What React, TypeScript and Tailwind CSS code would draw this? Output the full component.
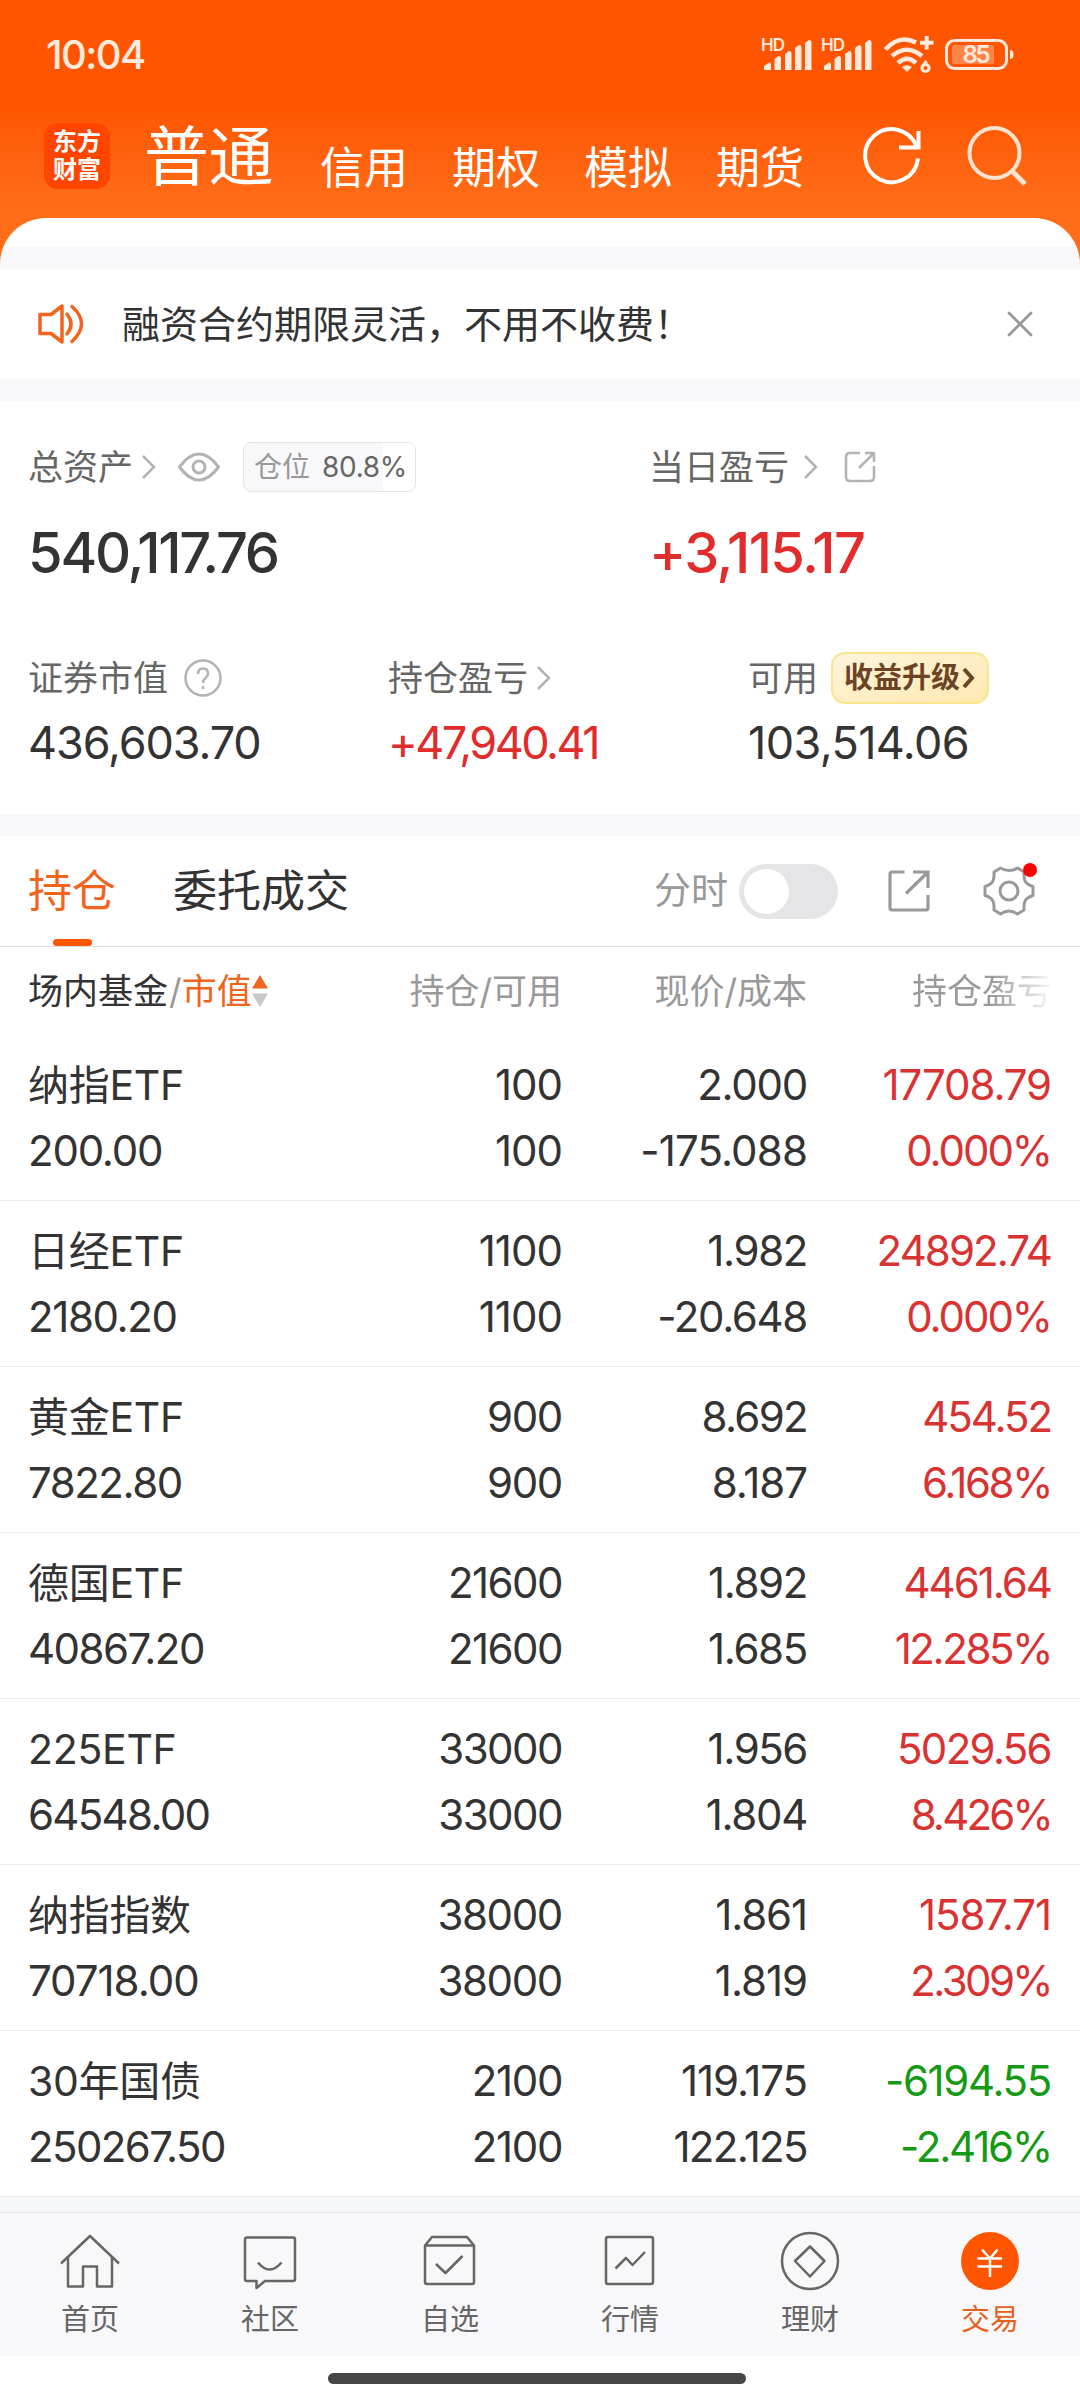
import { useState } from "react";
import clsx from "clsx";

type Holding = {
    name: string;
    value: string;
    amount: string;
    available: string;
    price: string;
    cost: string;
    profit: string;
    rate: string;
}

const HOLDINGS: Holding[] = [
    { name: "纳指ETF", value: "200.00", amount: "100", available: "100", price: "2.000", cost: "-175.088", profit: "17708.79", rate: "0.000%" },
    { name: "日经ETF", value: "2180.20", amount: "1100", available: "1100", price: "1.982", cost: "-20.648", profit: "24892.74", rate: "0.000%" },
    { name: "黄金ETF", value: "7822.80", amount: "900", available: "900", price: "8.692", cost: "8.187", profit: "454.52", rate: "6.168%" },
    { name: "德国ETF", value: "40867.20", amount: "21600", available: "21600", price: "1.892", cost: "1.685", profit: "4461.64", rate: "12.285%" },
    { name: "225ETF", value: "64548.00", amount: "33000", available: "33000", price: "1.956", cost: "1.804", profit: "5029.56", rate: "8.426%" },
    { name: "纳指指数", value: "70718.00", amount: "38000", available: "38000", price: "1.861", cost: "1.819", profit: "1587.71", rate: "2.309%" },
    { name: "30年国债", value: "250267.50", amount: "2100", available: "2100", price: "119.175", cost: "122.125", profit: "-6194.55", rate: "-2.416%" },
];

const ACCOUNTS = ["信用", "期权", "模拟", "期货"];

// how much each glyph should be tightened in table figures, in px
const TIGHTEN: Record<string, number> = {
    "0": 0.6, "1": 0.3, "2": 2, "3": 1.7, "4": 2.3, "5": 1.3, "6": 1.7, "7": 0.6, "8": 0.8, "9": 1.3, "%": 7, "-": -1.5,
};

const Figure = ({ children }: { children: string }) => {
    const total = children.split("").reduce((sum, c) => sum + (TIGHTEN[c] ?? 0), 0);

    return <div style={{ letterSpacing: `${(-0.5 - total / children.length).toFixed(2)}px` }}>{children}</div>;
}

const Signal = ({ className }: { className?: string }) => (
    <svg className={className} width="52" height="36" viewBox="0 0 52 36" fill="currentColor">
        <text x="0" y="14.500" fontSize="17" fontWeight="600" fontFamily="Inter, sans-serif" textLength="24">HD</text>
        <path d="M3 34v-4l5-3.500q2 0 2 2V34zM13.500 34V23l4-3q2.500 0 2.500 2v12zM24 34V18l4-3q2.500 0 2.500 2v17zM34 34V12l4-3q2.500 0 2.500 2v23zM44 34V7l4-3q2.500 0 2.500 2v28z" />
    </svg>
);

const Wifi = ({ className }: { className?: string }) => (
    <svg className={className} width="50" height="38" viewBox="0 0 50 38" fill="none" stroke="currentColor" strokeWidth="4.500">
        <path d="M1.500 13.500Q15-2 32 6.500M8 20Q23 7.500 38 20M14 27Q23 18.500 32 27" />
        <path d="M23 36l-5-5q5-3.500 10 0z" fill="currentColor" stroke="none" />
        <path d="M42.700 0v13.500M36 6.700h13.500" strokeWidth="4" />
        <path d="M42.500 25l-4 5.500" strokeWidth="3" />
        <circle cx="41.500" cy="32" r="3.600" strokeWidth="3" />
    </svg>
);

const Battery = ({ className }: { className?: string }) => (
    <svg className={className} width="70" height="36" viewBox="0 -3 70 36" fill="none">
        <rect x="1.500" y="1.500" width="60" height="28" rx="8" stroke="currentColor" strokeWidth="3" />
        <rect x="7" y="6" width="42" height="19" rx="2" fill="#ff8447" />
        <path d="M65 11q3.500 0 3.500 4.500t-3.500 4.500z" fill="currentColor" />
        <text x="31.500" y="24" textAnchor="middle" fontSize="24" fontWeight="600" fontFamily="Inter, sans-serif" fill="currentColor" textLength="28">85</text>
    </svg>
);

const Chevron = ({ className }: { className?: string }) => (
    <svg className={className} width="16" height="26" viewBox="0 0 16 26" fill="none" stroke="#b3b3b3" strokeWidth="2.500">
        <path d="M2 2l11 11L2 24" />
    </svg>
);

const StatusBar = () => (
    <div className="flex h-[110px] items-start pl-[46px] pr-[65px] pt-9 text-[#ffeadd]">
        <span className="mt-[-1px] text-[40px] font-medium leading-[40px] tracking-[-1.600px]">10:04</span>
        <div className="ml-auto flex">
            <Signal />
            <Signal className="ml-2" />
            <Wifi className="ml-[11px]" />
            <Battery className="ml-[11px]" />
        </div>
    </div>
);

const AccountTabs = () => (
    <div className="flex h-[108px] text-white">
        <div className="ml-11 mt-[13px] flex size-[66px] flex-col items-center justify-center rounded-[14px] bg-[#ff4500] text-[24px] font-bold leading-[28px]">
            <span>东方</span>
            <span>财富</span>
        </div>
        <div className="ml-[34px] mt-[11px] text-[65px] leading-[72px] tracking-[-0.5px]">普通</div>
        <div className="ml-[47px] mt-[36px] flex gap-11 text-[44px] leading-[44px]">
            {ACCOUNTS.map(a => <span key={a}>{a}</span>)}
        </div>
        <svg className="ml-[57px] mt-[17px] shrink-0" width="62" height="62" viewBox="0 0 62 62" fill="none" stroke="currentColor" strokeWidth="4">
            <path d="M55.500 19.500A26.500 26.500 0 1 0 57 31.500M38 20.500h19.500V4" />
        </svg>
        <svg className="ml-[43px] mt-4 shrink-0 text-[#ffe3d1]" width="64" height="64" viewBox="0 0 64 64" fill="none" stroke="currentColor" strokeWidth="4">
            <circle cx="28.500" cy="27" r="25" />
            <path d="M46 45l13 13" strokeWidth="5" />
        </svg>
    </div>
);

const Notice = ({ onClose }: { onClose: () => void }) => (
    <div className="flex h-[110px] items-center bg-white pl-9 pr-[46px]">
        <svg width="50" height="44" viewBox="0 0 50 44" fill="none" stroke="#f0641e" strokeWidth="3.500">
            <path d="M4 12.500h11L26 4v36L15 31.500H4z" strokeLinejoin="round" />
            <path d="M31 12q8 10 0 20M36 4.500q19 17 0 35" strokeLinecap="round" />
        </svg>
        <span className="ml-9 text-[38px] leading-[38px] text-[#333]">融资合约期限灵活，不用不收费！</span>
        <button className="ml-auto" onClick={onClose}>
            <svg width="28" height="28" viewBox="0 0 28 28" stroke="#999" strokeWidth="2.800" strokeLinecap="round">
                <path d="M3 3l22 22M25 3L3 25" />
            </svg>
        </button>
    </div>
);

const Summary = () => (
    <section className="h-[413px] bg-white px-7 pt-[41px] text-[35px] leading-[50px] text-[#666]">
        <div className="flex">
            <div className="w-[621px]">
                <div className="flex h-[50px] items-center">
                    <span>总资产</span>
                    <Chevron className="ml-2" />
                    <svg className="ml-5" width="44" height="32" viewBox="0 0 44 32" fill="none" stroke="#b3b3b3" strokeWidth="3">
                        <path d="M2.500 16Q12 3 22 3t19.500 13Q32 29 22 29T2.500 16z" strokeLinejoin="round" />
                        <circle cx="22" cy="16" r="6" />
                    </svg>
                    <div className="ml-[22px] flex h-[50px] w-[173px] items-center rounded-lg border border-[#e5e5e7] bg-linear-to-r from-[#f8f8fa] from-81% to-white to-81% pl-[10px] text-[28px]">
                        <span className="text-[#999]">仓位</span>
                        <span className="ml-3 tracking-[-0.3px]">80.8%</span>
                    </div>
                </div>
                <div className="mt-[30px] text-[56px] font-medium leading-[62px] tracking-[-2.200px] text-[#333]">540,117.76</div>
            </div>
            <div>
                <div className="flex h-[50px] items-center">
                    <span>当日盈亏</span>
                    <Chevron className="ml-[14px]" />
                    <svg className="ml-6" width="34" height="34" viewBox="0 0 34 34" fill="none" stroke="#b3b3b3" strokeWidth="2.500">
                        <path d="M17 3H7Q3 3 3 7v20q0 4 4 4h20q4 0 4-4V16M22 3h9v9M31 3L16 18" strokeLinejoin="round" />
                    </svg>
                </div>
                <div className="mt-[30px] text-[56px] font-medium leading-[62px] tracking-[-1.600px] text-[#e22b2b]">+3,115.17</div>
            </div>
        </div>
        <div className="mt-[68px] flex">
            <div className="w-[360px]">
                <div className="flex h-[52px] items-center">
                    <span>证券市值</span>
                    <svg className="ml-[15px]" width="40" height="40" viewBox="0 0 40 40" fill="none" stroke="#b3b3b3" strokeWidth="2.500">
                        <circle cx="20" cy="20" r="17.500" />
                        <path d="M15 16q0-5.500 5-5.500t5 5q0 2.500-2.500 4.500T20 25M20 28v3" />
                    </svg>
                </div>
                <div className="mt-[14px] text-[45px] leading-[50px] tracking-[-1.100px] text-[#333]">436,603.70</div>
            </div>
            <div className="w-[360px]">
                <div className="flex h-[52px] items-center">
                    <span>持仓盈亏</span>
                    <Chevron className="ml-2" />
                </div>
                <div className="mt-[14px] text-[45px] leading-[50px] tracking-[-2.500px] text-[#e22b2b]">+47,940.41</div>
            </div>
            <div>
                <div className="flex h-[52px] items-center">
                    <span>可用</span>
                    <div className="ml-[13px] flex h-[52px] w-[158px] items-center rounded-[14px] border-2 border-[#fae58e] bg-linear-to-br from-[#fff4dc] to-[#ffe9b0] pl-[11px] text-[29px] font-bold text-[#6b4426]">
                        收益升级
                        <svg className="ml-px" width="15" height="24" viewBox="0 0 15 24" fill="none" stroke="currentColor" strokeWidth="4">
                            <path d="M3 3l8 9-8 9" />
                        </svg>
                    </div>
                </div>
                <div className="mt-[14px] text-[45px] leading-[50px] tracking-[-0.600px] text-[#333]">103,514.06</div>
            </div>
        </div>
    </section>
);

const ListToolbar = () => {
    const [intraday, setIntraday] = useState(false);

    return (
        <div className="flex h-[111px] items-center border-b border-[#dedede] bg-white pl-7 text-[44px]">
            <div className="relative flex h-full items-center text-[#f0641e]">
                持仓
                <span className="absolute bottom-0 left-[25px] h-[7px] w-[39px] rounded-full bg-[#ff5500]"></span>
            </div>
            <span className="ml-[57px] text-[#333]">委托成交</span>
            <span className="ml-auto text-[37px] text-[#999]">分时</span>
            <button
                onClick={() => setIntraday(!intraday)}
                className={clsx("ml-[11px] flex h-[55px] w-[99px] rounded-full p-[5px]", intraday ? "justify-end bg-[#ff5500]" : "bg-[#e5e5e7]")}>
                <span className="size-[45px] rounded-full bg-white"></span>
            </button>
            <svg className="ml-[48px]" width="46" height="46" viewBox="0 0 46 46" fill="none" stroke="#999" strokeWidth="3.200">
                <path d="M18.500 4H6Q4 4 4 6v34q0 2 2 2h34q2 0 2-2V27M27 4h15v16M42 4L20 25.500" />
            </svg>
            <div className="relative ml-[50px] mr-[44px]">
                <svg width="54" height="54" viewBox="0 0 54 54" fill="none" stroke="#999" strokeWidth="3" strokeLinejoin="round">
                    <path d="M18.500 4q8.500 5 17 0l6.500 4q-.500 9 3 11.500t6 3v9q-2.500.500-6 3t-3 11.500l-6.500 4q-8.500-6-17 0l-6.500-4q.500-9-3-11.500t-6-3v-9q2.500-.500 6-3t3-11.500z" />
                    <circle cx="27" cy="27" r="9" />
                </svg>
                <span className="absolute -right-px -top-px size-[14px] rounded-full bg-[#ff0000]"></span>
            </div>
        </div>
    );
}

const HoldingRow = ({ holding }: { holding: Holding }) => (
    <div className="grid h-[166px] grid-cols-[290px_244px_245px_244px] border-b border-[#ececec] pl-7 pt-[17px] text-right text-[42px] leading-[66px] text-[#333]">
        <div className="text-left">
            <div className="text-[41px] tracking-[-0.3px]">{holding.name}</div>
            <Figure>{holding.value}</Figure>
        </div>
        <div>
            <Figure>{holding.amount}</Figure>
            <Figure>{holding.available}</Figure>
        </div>
        <div>
            <Figure>{holding.price}</Figure>
            <Figure>{holding.cost}</Figure>
        </div>
        <div className={holding.profit.startsWith("-") ? "text-[#149a14]" : "text-[#d93232]"}>
            <Figure>{holding.profit}</Figure>
            <Figure>{holding.rate}</Figure>
        </div>
    </div>
);

const HoldingList = () => (
    <section className="bg-white">
        <div className="grid h-[88px] grid-cols-[290px_244px_245px_245px] items-center pl-7 text-right text-[35px] leading-[40px] text-[#999]">
            <div className="flex items-center">
                <span className="text-[#333]">场内基金</span>
                <span className="ml-px">/</span>
                <span className="text-[#f0641e]">市值</span>
                <svg width="16" height="32" viewBox="0 0 16 32">
                    <path d="M8 0l8 13.500H0z" fill="#f0641e" />
                    <path d="M8 32L0 18.500h16z" fill="#c8c8c8" />
                </svg>
            </div>
            <span>持仓/可用</span>
            <span>现价/成本</span>
            <span className="bg-linear-to-r from-[#999] from-75% to-[#fafafa] bg-clip-text text-transparent">持仓盈亏</span>
        </div>
        {HOLDINGS.map(h => <HoldingRow key={h.name} holding={h} />)}
    </section>
);

const NAV_ITEMS = [
    { label: "首页", icon: <path d="M1 32.500L30 5l29 27.500M8 26.500v29h15v-20h14v20h15v-29" /> },
    { label: "社区", icon: <path d="M7 6.500h46q2 0 2 2V48q0 2-2 2H25l-8.500 7V50H7q-2 0-2-2V8.500q0-2 2-2zM18 31.500q11.500 14 23.500 0" /> },
    { label: "自选", icon: <path d="M5 14.500L12 6h35l7 8.500V51q0 2-2 2H7q-2 0-2-2zh49M16 33l9.500 9L42.500 25" /> },
    { label: "行情", icon: <path d="M8 6h43q2 0 2 2v43q0 2-2 2H8q-2 0-2-2V8q0-2 2-2zM15.500 37.500L26 27l6.500 7L45 21" /> },
    { label: "理财", icon: <><circle cx="30" cy="30" r="28" /><path d="M30 15.500L44.500 30 30 45.500 15 30z" /></> },
    { label: "交易", icon: <><circle cx="30" cy="30" r="29" fill="#ff5500" stroke="none" /><path d="M22 18.500l8 9 7.500-9M17.500 27.500h24.500M17.500 35.500h24.500M30 27v19" stroke="#fff" /></> },
];

const BottomNav = () => (
    <nav className="grid h-[144px] grid-cols-6 border-t border-[#e2e2e4] bg-[#f8f8fa] pt-[18px]">
        {NAV_ITEMS.map((item, i) => (
            <div key={item.label} className={clsx("flex flex-col items-center text-[29px] leading-[36px]", i === 5 ? "text-[#e8601c]" : "text-[#666]")}>
                <svg width="60" height="60" viewBox="0 0 60 60" fill="none" stroke="#666" strokeWidth="2.500" strokeLinejoin="round">
                    {item.icon}
                </svg>
                <span className="mt-[11px]">{item.label}</span>
            </div>
        ))}
    </nav>
);

export default function App() {
    const [showNotice, setShowNotice] = useState(true);

    return (
        <main className="h-[2400px] w-[1080px] overflow-hidden bg-white font-['Inter','Noto_Sans_CJK_SC',sans-serif]">
            <header className="h-[265px] bg-linear-to-b from-[#ff5500] from-40% to-[#ff6d18] to-78%">
                <StatusBar />
                <AccountTabs />
                <div className="h-[47px] rounded-t-[46px] bg-linear-to-b from-white from-[29px] to-[#f8f8fa] to-[29px]"></div>
            </header>
            <div className="bg-[#f8f8fa] pt-1">
                {showNotice && <Notice onClose={() => setShowNotice(false)} />}
                <div className="h-[22px]"></div>
                <Summary />
                <div className="h-[22px]"></div>
                <ListToolbar />
                <HoldingList />
                <div className="h-[15px] bg-[#f6f7f9]"></div>
                <BottomNav />
            </div>
            <div className="ml-[328px] mt-[17px] h-[11px] w-[418px] rounded-full bg-[#464646]"></div>
        </main>
    );
}
